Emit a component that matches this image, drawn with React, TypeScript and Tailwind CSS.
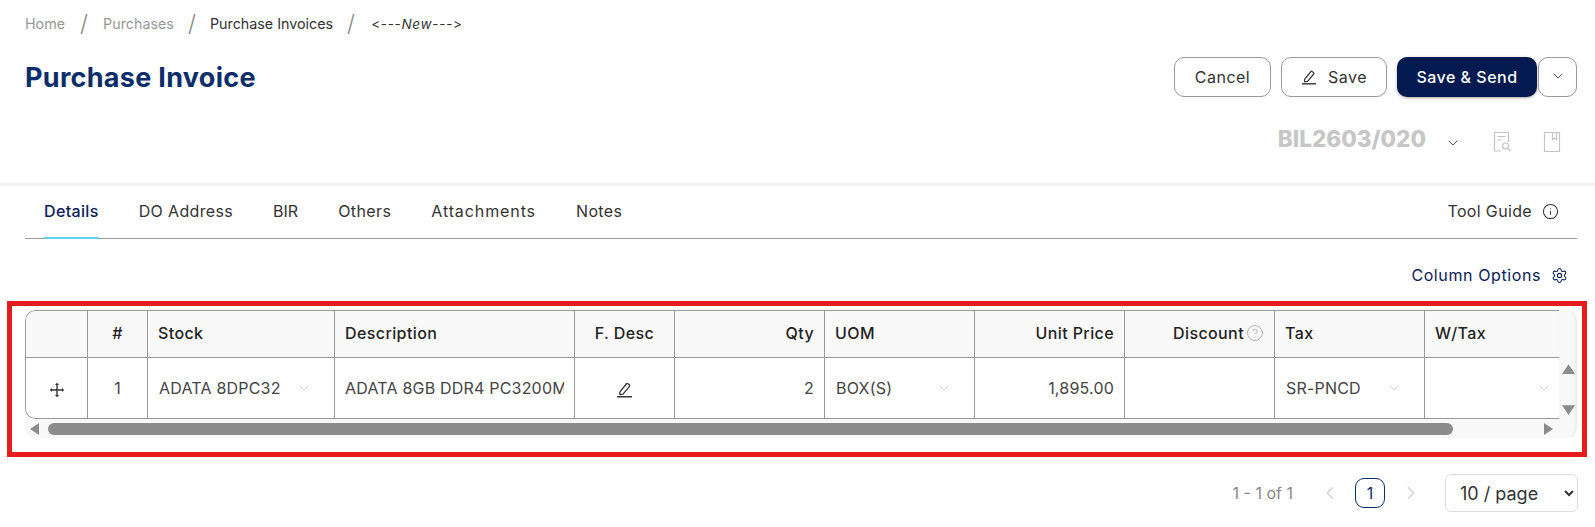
import React from "react";
import { ChevronDown, ChevronLeft, ChevronRight, CircleHelp, Info, Settings } from "lucide-react";

const columns = [
  { label: "", width: "w-[62px]", align: "text-left" },
  { label: "#", width: "w-[60px]", align: "text-center" },
  { label: "Stock", width: "w-[187px]", align: "text-left" },
  { label: "Description", width: "w-[240px]", align: "text-left" },
  { label: "F. Desc", width: "w-[100px]", align: "text-center" },
  { label: "Qty", width: "w-[150px]", align: "text-right" },
  { label: "UOM", width: "w-[150px]", align: "text-left" },
  { label: "Unit Price", width: "w-[150px]", align: "text-right" },
  { label: "Discount", width: "w-[150px]", align: "text-right" },
  { label: "Tax", width: "w-[150px]", align: "text-left" },
  { label: "W/Tax", width: "w-[150px]", align: "text-left" },
];

const tabs = [
  { label: "DO Address", tracking: "tracking-[0.35px]" },
  { label: "BIR", tracking: "tracking-[0px]" },
  { label: "Others", tracking: "tracking-[0.4px]" },
  { label: "Attachments", tracking: "tracking-[0.9px]" },
  { label: "Notes", tracking: "tracking-[0.35px]" },
];

const PenIcon = ({ className }: { className?: string }) => (
  <svg viewBox="0 0 16 16" fill="none" stroke="currentColor" strokeWidth="1.2" className={className}>
    <path d="M3.6 10.4 9.8 2.6a1 1 0 0 1 1.4-.1l1.4 1.1a1 1 0 0 1 .1 1.4L6.6 12.4l-3 .3z" strokeLinejoin="round" />
    <path d="M1 14.8h14" strokeWidth="1.4" />
  </svg>
);

const MoveIcon = () => (
  <svg viewBox="0 0 16 16" className="w-[16px] h-[16px] inline-block text-[#333]" fill="currentColor">
    <path d="M7.3 2.5h1.4v11H7.3z" />
    <path d="M2.5 7.3h11v1.4h-11z" />
    <path d="M8 .8 10 3H6zM8 15.2 6 13h4zM.8 8 3 6v4zM15.2 8 13 10V6z" />
  </svg>
);

const SelectCell = ({ value }: { value: string }) => (
  <div className="flex items-center justify-between pl-[11px] pr-[22px]">
    <span className="truncate">{value}</span>
    <ChevronDown className="w-[16px] h-[16px] text-[#bdbdbd] shrink-0" strokeWidth={1} />
  </div>
);

export default function App() {
  return (
    <div className="w-[1595px] h-[527px] bg-white overflow-hidden text-[#333] font-['Inter','Liberation_Sans',sans-serif]">
      {/* header */}
      <div className="pl-[25px] pr-[18px] pt-[15px]">
        <div className="flex items-center h-[18px] text-[14.3px] text-[#999]">
          <span>Home</span>
          <span className="mx-[15px] text-[23px] font-light text-[#888]">/</span>
          <span>Purchases</span>
          <span className="mx-[14px] text-[23px] font-light text-[#888]">/</span>
          <span className="text-[#333]">Purchase Invoices</span>
          <span className="mx-[14px] text-[23px] font-light text-[#888]">/</span>
          <span className="ml-[2px] text-[13.5px] text-[#333] tracking-[0.7px] [font-feature-settings:'calt'_0,'liga'_0]">
            &lt;---<span className="italic">New</span>---&gt;
          </span>
        </div>
        <div className="flex justify-between mt-[24px]">
          <h1 className="text-[27px] font-bold text-[#0b2e6b] leading-[40px] mt-[1px] tracking-[0.3px]">Purchase Invoice</h1>
          <div className="flex text-[16px] tracking-[0.5px]">
            <button className="w-[97px] h-[40px] rounded-[10px] border border-[#999] bg-white">Cancel</button>
            <button className="ml-[10px] w-[106px] h-[40px] rounded-[10px] border border-[#999] bg-white flex items-center justify-center gap-[11px]">
              <PenIcon className="w-[16px] h-[16px]" />
              Save
            </button>
            <button className="ml-[10px] w-[140px] h-[40px] rounded-[10px] bg-[#021a4f] text-white font-medium shadow-[0_1px_3px_rgba(0,0,0,0.35)]">
              Save &amp; Send
            </button>
            <button className="ml-[1px] w-[39px] h-[40px] rounded-[10px] border border-[#999] bg-white flex items-center justify-center">
              <ChevronDown className="w-[16px] h-[16px] -mt-[3px]" strokeWidth={1.2} />
            </button>
          </div>
        </div>
        <div className="flex justify-end items-center h-[46px] mt-[18px] pr-[16px]">
          <span className="text-[22.5px] font-extrabold text-[#c6c6c6]">BIL2603/020</span>
          <ChevronDown className="ml-[19px] mt-[8px] w-[16px] h-[16px]" strokeWidth={1.3} />
          <svg viewBox="0 0 18 22" fill="none" stroke="#c4c4c4" strokeWidth="1.2" className="ml-[32px] mt-[6px] w-[18px] h-[22px]">
            <path d="M8 20H1.5V1.5h14V11" />
            <path d="M4.5 5.5h8M4.5 9h4" />
            <circle cx="12.5" cy="15" r="3" />
            <path d="m15 17.5 2.5 2.5" />
          </svg>
          <svg viewBox="0 0 18 22" fill="none" stroke="#c4c4c4" strokeWidth="1.2" className="ml-[32px] mt-[6px] w-[18px] h-[22px]">
            <path d="M1.5 1.5h15v19h-15z" />
            <path d="M9.5 1.5v7l2-1.6 2 1.6v-7" />
          </svg>
        </div>
      </div>

      <div className="h-[3px] mt-[21px] bg-[#f3f3f3]" />

      {/* tabs */}
      <div className="ml-[25px] mr-[18px] h-[53px] flex items-stretch justify-between border-b border-[#999] text-[16px] tracking-[0.35px]">
        <div className="flex items-stretch pl-[19px] gap-[40px]">
          <span className="flex items-center pb-[2px] text-[#0b2257] font-medium border-b-2 border-[#5fd0ee] -mb-[1px]">Details</span>
          {tabs.map((tab) => (
            <span key={tab.label} className={`flex items-center pb-[2px] ${tab.tracking}`}>{tab.label}</span>
          ))}
        </div>
        <div className="flex items-center pb-[2px] gap-[10px] pr-[18px]">
          <span>Tool Guide</span>
          <Info className="w-[17px] h-[17px]" strokeWidth={1.5} />
        </div>
      </div>

      <div className="flex justify-end items-center gap-[10px] pr-[27px] mt-[26px] h-[20px] text-[16px] tracking-[0.6px] text-[#0b2257]">
        <span>Column Options</span>
        <Settings className="w-[17px] h-[17px]" strokeWidth={1.5} />
      </div>

      {/* grid */}
      <div className="relative ml-[25px] mr-[18px] mt-[25px]">
        <div className="flex rounded-[10px] bg-[#f8f8f8] overflow-hidden shadow-[inset_-4px_0_4px_-3px_rgba(0,0,0,0.08)]">
          <div className="w-[1534px] shrink-0 overflow-hidden">
            <table className="table-fixed w-[1549px] border-separate border-spacing-0 text-[16px] tracking-[0.2px] rounded-l-[10px] overflow-hidden">
              <thead>
                <tr className="h-[48px] bg-[#f9f9f9] text-[#222]">
                  {columns.map((col, i) => (
                    <th
                      key={i}
                      className={`${col.width} ${col.align} font-medium tracking-[0.4px] px-[10px] pb-[2px] border-t-[1.5px] border-b-[1.5px] border-l-[1.5px] border-[#999] ${
                        i === 0 ? "rounded-tl-[10px]" : ""
                      }`}
                    >
                      {col.label === "Discount" ? (
                        <span className="inline-flex items-center gap-[2px]">
                          Discount
                          <CircleHelp className="w-[18px] h-[18px] text-[#aaa]" strokeWidth={1.2} />
                        </span>
                      ) : (
                        col.label
                      )}
                    </th>
                  ))}
                </tr>
              </thead>
              <tbody>
                <tr className="h-[61px] bg-white text-[#444]">
                  <td className="border-l-[1.5px] border-b-[1.5px] border-[#999] rounded-bl-[10px] text-center">
                    <MoveIcon />
                  </td>
                  <td className="border-l-[1.5px] border-b-[1.5px] border-[#999] text-center">1</td>
                  <td className="border-l-[1.5px] border-b-[1.5px] border-[#999]">
                    <SelectCell value="ADATA 8DPC32" />
                  </td>
                  <td className="border-l-[1.5px] border-b-[1.5px] border-[#999] pl-[10px] pr-[10px]">
                    <div className="overflow-hidden whitespace-nowrap">ADATA 8GB DDR4 PC3200MHz</div>
                  </td>
                  <td className="border-l-[1.5px] border-b-[1.5px] border-[#999] text-center">
                    <PenIcon className="w-[17px] h-[17px] inline-block text-[#333]" />
                  </td>
                  <td className="border-l-[1.5px] border-b-[1.5px] border-[#999] text-right px-[10px]">2</td>
                  <td className="border-l-[1.5px] border-b-[1.5px] border-[#999]">
                    <SelectCell value="BOX(S)" />
                  </td>
                  <td className="border-l-[1.5px] border-b-[1.5px] border-[#999] text-right px-[10px]">1,895.00</td>
                  <td className="border-l-[1.5px] border-b-[1.5px] border-[#999]" />
                  <td className="border-l-[1.5px] border-b-[1.5px] border-[#999]">
                    <SelectCell value="SR-PNCD" />
                  </td>
                  <td className="border-l-[1.5px] border-b-[1.5px] border-[#999]">
                    <SelectCell value="" />
                  </td>
                </tr>
              </tbody>
            </table>
            {/* horizontal scrollbar */}
            <div className="h-[19px] flex items-center pl-[5px] pr-[6px] justify-between">
              <svg viewBox="0 0 9 12" className="w-[9px] h-[12px] fill-[#8c8c8c]"><path d="M9 0v12L0 6z" /></svg>
              <div className="ml-[9px] h-[12px] w-[1405px] rounded-full bg-[#8c8c8c]" />
              <div className="flex-1" />
              <svg viewBox="0 0 9 12" className="w-[9px] h-[12px] fill-[#8c8c8c]"><path d="M0 0v12l9-6z" /></svg>
            </div>
          </div>
          {/* vertical scrollbar */}
          <div className="w-[18px] flex flex-col items-center pt-[54px]">
            <svg viewBox="0 0 12 9" className="w-[13px] h-[10px] fill-[#8c8c8c]"><path d="M0 9h12L6 0z" /></svg>
            <svg viewBox="0 0 12 9" className="mt-[31px] w-[13px] h-[10px] fill-[#8c8c8c]"><path d="M0 0h12L6 9z" /></svg>
          </div>
        </div>
        {/* annotation frame */}
        <div className="absolute -left-[18px] -right-[10px] -top-[9px] -bottom-[19px] border-[5px] border-[#e61c1c] pointer-events-none" />
      </div>

      <div className="ml-[25px] mr-[18px] mt-[22px] h-px bg-[#f0f0f0]" />

      {/* pagination */}
      <div className="flex justify-end items-center pr-[17px] mt-[13px] text-[16px] text-[#888]">
        <span>1 - 1 of 1</span>
        <ChevronLeft className="ml-[26px] w-[22px] h-[22px] text-[#d0d0d0]" strokeWidth={1.2} />
        <span className="ml-[14px] w-[30px] h-[30px] flex items-center justify-center rounded-[9px] border border-[#0b2e6b] text-[#0b2e6b]">1</span>
        <ChevronRight className="ml-[15px] w-[22px] h-[22px] text-[#d0d0d0]" strokeWidth={1.2} />
        <select className="ml-[23px] w-[133px] h-[38px] pl-[10px] rounded-[6px] border border-[#ddd] bg-white text-[18px] text-[#333]">
          <option>10 / page</option>
        </select>
      </div>
    </div>
  );
}
